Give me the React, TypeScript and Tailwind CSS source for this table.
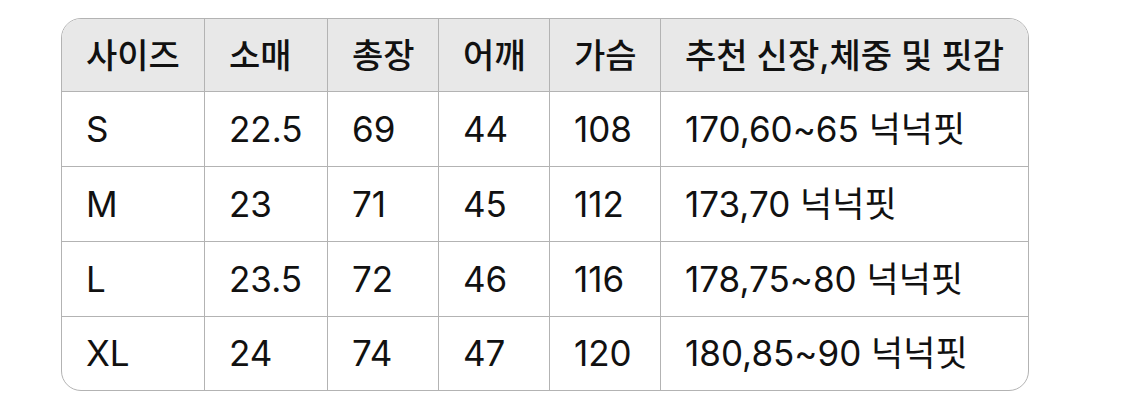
const header = ['사이즈', '소매', '총장', '어깨', '가슴', '추천 신장,체중 및 핏감']

const rows = [
  ['S', '22.5', '69', '44', '108', '170,60~65 넉넉핏'],
  ['M', '23', '71', '45', '112', '173,70 넉넉핏'],
  ['L', '23.5', '72', '46', '116', '178,75~80 넉넉핏'],
  ['XL', '24', '74', '47', '120', '180,85~90 넉넉핏'],
]

const colW = ['w-[143px]', 'w-[123px]', 'w-[111px]', 'w-[111px]', 'w-[111px]', 'w-[367px]']

export default function App() {
  return (
    <div
      className="w-[1125px] h-[414px] bg-white pl-[61px] pt-[18px] text-[#111]"
      style={{ fontFamily: 'Inter, "Noto Sans CJK KR", sans-serif' }}
    >
      <div className="w-[968px] rounded-[20px] border border-[#b3b3b3] overflow-hidden">
        {/* Header */}
        <div className="flex h-[73px] bg-[#e8e8e8] border-b border-[#b3b3b3]">
          {header.map((h, i) => (
            <div
              key={i}
              className={`${colW[i]} flex items-center pl-[24px] text-[34px] font-medium ${
                i < 5 ? 'border-r border-[#b3b3b3]' : ''
              }`}
            >
              {h}
            </div>
          ))}
        </div>

        {/* Rows */}
        {rows.map((r, ri) => (
          <div
            key={ri}
            className={`flex ${ri < 3 ? 'h-[75px] border-b border-[#b3b3b3]' : 'h-[73px]'}`}
          >
            {r.map((c, ci) => (
              <div
                key={ci}
                className={`${colW[ci]} flex items-center pl-[24px] text-[35px] ${
                  ci < 5 ? 'border-r border-[#b3b3b3]' : ''
                }`}
              >
                {c}
              </div>
            ))}
          </div>
        ))}
      </div>
    </div>
  )
}
